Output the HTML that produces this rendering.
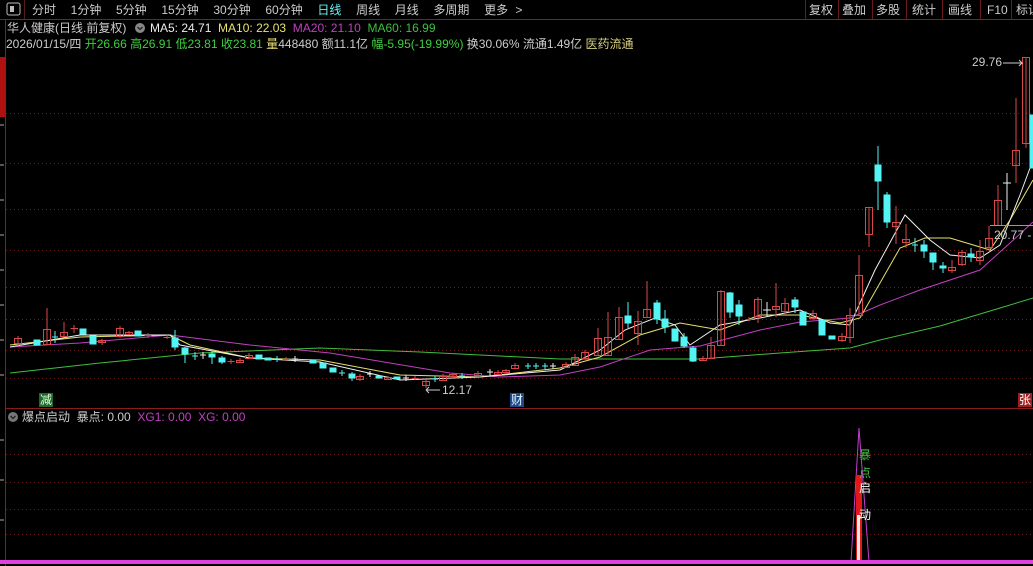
<!DOCTYPE html>
<html><head><meta charset="utf-8"><style>
html,body{margin:0;padding:0;background:#000;width:1033px;height:566px;overflow:hidden;font-family:"Liberation Sans","Noto Sans CJK SC",sans-serif;}
.t{position:absolute;font-size:12px;white-space:nowrap;line-height:14px}
</style></head><body>
<svg width="1033" height="566" style="position:absolute;left:0;top:0" xmlns="http://www.w3.org/2000/svg">
<!-- toolbar -->
<line x1="0" y1="19.5" x2="1033" y2="19.5" stroke="#8a1c1c"/>
<rect x="7" y="3" width="13" height="12" rx="2" fill="none" stroke="#bbb"/>
<rect x="10" y="6" width="4" height="6" fill="#bbb"/>
<line x1="24.5" y1="0" x2="24.5" y2="19" stroke="#5a1a1a"/>
<g stroke="#6a1a1a"><line x1="805.5" y1="0" x2="805.5" y2="19"/><line x1="838.5" y1="0" x2="838.5" y2="19"/><line x1="872.5" y1="0" x2="872.5" y2="19"/><line x1="906.5" y1="0" x2="906.5" y2="19"/><line x1="942.5" y1="0" x2="942.5" y2="19"/><line x1="980.5" y1="0" x2="980.5" y2="19"/><line x1="1011.5" y1="0" x2="1011.5" y2="19"/></g>
<circle cx="140" cy="28" r="5" fill="#888"/><path d="M137.5 27l2.5 2.5 2.5-2.5" stroke="#222" fill="none" stroke-width="1.3"/>
<!-- left axis -->
<line x1="5.5" y1="20" x2="5.5" y2="566" stroke="#8a1c1c"/>
<rect x="0" y="57" width="5" height="60" fill="#b01010"/>
<g stroke="#aaa"><line x1="0" y1="125" x2="4" y2="125"/><line x1="0" y1="165" x2="4" y2="165"/><line x1="0" y1="200" x2="4" y2="200"/><line x1="0" y1="235" x2="4" y2="235"/><line x1="0" y1="270" x2="4" y2="270"/><line x1="0" y1="305" x2="4" y2="305"/><line x1="0" y1="340" x2="4" y2="340"/><line x1="0" y1="375" x2="4" y2="375"/><line x1="0" y1="440" x2="4" y2="440"/><line x1="0" y1="480" x2="4" y2="480"/><line x1="0" y1="520" x2="4" y2="520"/></g>
<!-- grid -->
<g stroke="#6a1e1e" stroke-dasharray="1,3"><line x1="6" y1="113.5" x2="1033" y2="113.5"/><line x1="6" y1="163.5" x2="1033" y2="163.5"/><line x1="6" y1="209.5" x2="1033" y2="209.5"/><line x1="6" y1="250.5" x2="1033" y2="250.5"/><line x1="6" y1="287.5" x2="1033" y2="287.5"/><line x1="6" y1="319.5" x2="1033" y2="319.5"/><line x1="6" y1="350.5" x2="1033" y2="350.5"/><line x1="6" y1="378.5" x2="1033" y2="378.5"/>
<line x1="6" y1="454.5" x2="1033" y2="454.5"/><line x1="6" y1="482.5" x2="1033" y2="482.5"/><line x1="6" y1="509.5" x2="1033" y2="509.5"/><line x1="6" y1="534.5" x2="1033" y2="534.5"/></g>
<line x1="6" y1="408.5" x2="1033" y2="408.5" stroke="#8a1c1c"/>
<!-- MAs -->
<polyline fill="none" stroke="#3fbf3f" points="10,373 100,363 200,353 320,348 420,352 500,356 560,359 700,359 780,353 850,348 880,340 940,326 1000,308 1033,298"/>
<polyline fill="none" stroke="#c040c0" points="10,347 80,343 170,335 250,345 330,353 450,373 500,377 560,375 600,367 650,350 700,346 760,330 800,322 850,318 880,305 920,290 980,270 1010,243 1033,222"/>
<polyline fill="none" stroke="#e8e070" points="10,345 80,337 170,335 190,345 250,358 320,360 400,375 480,377 560,368 600,357 640,335 680,323 720,330 760,315 800,315 840,323 860,318 900,248 925,238 950,238 970,244 990,250 1010,220 1033,180"/>
<polyline fill="none" stroke="#f0f0f0" points="10,347 80,335 170,335 180,345 250,358 320,362 400,380 480,377 560,370 600,350 625,330 655,318 675,325 690,345 720,325 760,318 800,310 830,323 850,325 875,270 905,215 930,240 950,255 980,258 1000,245 1020,195 1033,160"/>
<!-- candles: red hollow -->
<g fill="none" stroke="#d84848" stroke-width="1">
<path d="M18 336v10M14.5 338.5h7v5h-7z M47 308v37M43.5 329.5h7v15h-7z M64 322v15M60.5 332.5h7v4h-7z M74 325v8M70.5 328.5h7v1 M102 339v6M98.5 340.5h7v2h-7z M120 326v12M116.5 328.5h7v8h-7z M129 331v4M125.5 332.5h7v2h-7z M148 333v5M144.5 335.5h7 M167 335v4M163.5 337.5h7 M231 359v5M227.5 361.5h7 M240 358v5M236.5 360.5h7v2h-7z M249 353v6M245.5 355.5h7v3h-7z M286 357v4M282.5 359.5h7 M360 374v7M356.5 376.5h7v3h-7z M388 376v4M384.5 377.5h7v2h-7z M415 376v4M411.5 378.5h7 M426 380v8M422.5 381.5h7v4h-7z M443 374v7M439.5 376.5h7v4h-7z M453 373v4M449.5 374.5h7v2h-7z M478 371v5M474.5 373.5h7v2h-7z M498 370v5M494.5 372.5h7v2h-7z M506 369v4M502.5 370.5h7v2h-7z M515 363v6M511.5 365.5h7v3h-7z M566 362v6M562.5 364.5h7v3h-7z M575 354v12M571.5 357.5h7v8h-7z M585 350v9M581.5 352.5h7v6h-7z M598 328v28M594.5 338.5h7v17h-7z M608 312v44M604.5 337.5h7v18h-7z M619 307v33M615.5 317.5h7v22h-7z M638 311v34M634.5 321.5h7v12h-7z M647 281v36M643.5 309.5h7v8h-7z M703 356v5M699.5 358.5h7v2h-7z M711 337v22M707.5 345.5h7v13h-7z M721 290v56M717.5 291.5h7v54h-7z M749 317v4M745.5 319.5h7 M758 297v26M754.5 299.5h7v17h-7z M776 283v34M772.5 306.5h7v3h-7z M785 298v17M781.5 303.5h7v8h-7z M813 310v10M809.5 313.5h7v5h-7z M842 333v9M838.5 336.5h7v4h-7z M850 308v35M846.5 315.5h7v22h-7z M859 255v60M855.5 275.5h7v40h-7z M869 207v40M865.5 207.5h7v27h-7z M896 206v38M892.5 222.5h7v4h-7z M906 224v24M902.5 239.5h7v3h-7z M952 260v13M948.5 267.5h7v3h-7z M962 250v16M958.5 252.5h7v12h-7z M980 240v25M976.5 251.5h7v9h-7z M989 226v25M985.5 238.5h7v9h-7z M998 185v41M994.5 200.5h7v25h-7z M1016 98v85M1012.5 150.5h7v15h-7z M1026 57v91M1022.5 57.5h7v86h-7z"/>
</g>
<!-- cyan -->
<g fill="#54f4f4" stroke="#54f4f4">
<rect x="34" y="340" width="6" height="5"/><path d="M55 331v12M52 337h6" fill="none"/><rect x="80" y="329" width="6" height="5"/><rect x="90" y="336" width="6" height="8"/><rect x="135" y="331" width="6" height="5"/>
<path d="M175 330v20M185 347v16M195 352v8M192 356h6M212 351v13M222 356v8M277 356v6M274 359h6M342 370v6M339 373h6M352 372v9M435 376v6M432 379h6M462 373v6M459 376h6M528 363v6M525 366h6M536 363v6M533 366h6M545 363v6M542 366h6" fill="none"/>
<rect x="172" y="338" width="6" height="9"/><rect x="182" y="348" width="6" height="6"/><rect x="209" y="354" width="6" height="3"/><rect x="219" y="358" width="6" height="4"/><rect x="256" y="355" width="6" height="4"/><rect x="265" y="358" width="6" height="2"/><rect x="310" y="360" width="6" height="3"/><rect x="320" y="363" width="6" height="5"/><rect x="330" y="368" width="6" height="4"/><rect x="349" y="374" width="6" height="4"/><rect x="376" y="376" width="6" height="2"/><rect x="394" y="377" width="6" height="2"/>
<path d="M628 302v26M657 300v24M665 310v23M684 333v15M693 346v16M730 292v26M739 300v25M795 297v16M878 146v64M887 192v36M915 238v14M912 245h6M924 240v18M933 253v17M943 262v11M971 248v14" fill="none"/>
<rect x="625" y="316" width="6" height="7"/><rect x="654" y="303" width="6" height="16"/><rect x="662" y="319" width="6" height="8"/><rect x="672" y="329" width="6" height="12"/><rect x="681" y="337" width="6" height="9"/><rect x="690" y="348" width="6" height="13"/><rect x="727" y="293" width="6" height="19"/><rect x="736" y="305" width="6" height="11"/><rect x="792" y="300" width="6" height="7"/><rect x="800" y="312" width="6" height="13"/><rect x="819" y="320" width="6" height="15"/><rect x="829" y="336" width="6" height="3"/><rect x="875" y="165" width="6" height="16"/><rect x="884" y="195" width="6" height="27"/><rect x="921" y="245" width="6" height="6"/><rect x="930" y="253" width="6" height="9"/><rect x="940" y="266" width="6" height="2"/><rect x="968" y="254" width="6" height="3"/><rect x="1030" y="115" width="4" height="53"/>
</g>
<!-- white crosses -->
<g stroke="#eee" fill="none"><path d="M203 352v7M200 355h6M295 356v6M292 359h6M370 371v6M367 374h6M406 375v6M403 378h6M490 369v7M487 372h6M553 363v6M550 366h6M767 302v14M763 310h8M1007 173v37M1003 183h8"/></g>
<!-- markers -->
<path d="M1003 63h19l-3-3M1022 63l-3 3" stroke="#ccc" fill="none"/>
<line x1="990" y1="225.5" x2="1033" y2="225.5" stroke="#999"/>
<path d="M426 390h14M426 390l3-3M426 390l3 3" stroke="#ccc" fill="none"/>
<!-- lower panel -->
<polygon points="851,562 859,428 869,562" fill="none" stroke="#c040d0"/>
<rect x="856" y="475" width="6" height="87" fill="#e01818"/>
<rect x="857" y="515" width="3" height="47" fill="#ffe8e8"/>
<circle cx="13" cy="417" r="5" fill="#777"/><path d="M10.5 416l2.5 2.5 2.5-2.5" stroke="#222" fill="none" stroke-width="1.3"/>
<rect x="0" y="560" width="1033" height="4" fill="#e040e0"/>
</svg>
<div class="t" style="left:32px;top:3px;color:#ccc;word-spacing:4px">分时&nbsp; 1分钟&nbsp; 5分钟&nbsp; 15分钟&nbsp; 30分钟&nbsp; 60分钟&nbsp; <span style="color:#6cf0f0">日线</span>&nbsp; 周线&nbsp; 月线&nbsp; 多周期&nbsp; 更多 &gt;</div>
<div class="t" style="left:809px;top:3px;color:#ccc">复权</div>
<div class="t" style="left:842px;top:3px;color:#ccc">叠加</div>
<div class="t" style="left:876px;top:3px;color:#ccc">多股</div>
<div class="t" style="left:912px;top:3px;color:#ccc">统计</div>
<div class="t" style="left:948px;top:3px;color:#ccc">画线</div>
<div class="t" style="left:987px;top:3px;color:#ccc">F10</div>
<div class="t" style="left:1016px;top:3px;color:#ccc">标识</div>
<div class="t" style="left:7px;top:21px;color:#ccc">华人健康(日线.前复权)</div>
<div class="t" style="left:150px;top:21px"><span style="color:#eee">MA5: 24.71</span>&nbsp; <span style="color:#e8e070">MA10: 22.03</span>&nbsp; <span style="color:#c040c0">MA20: 21.10</span>&nbsp; <span style="color:#3fbf3f">MA60: 16.99</span></div>
<div class="t" style="left:6px;top:37px;color:#ccc">2026/01/15/四 <span style="color:#3fcf3f">开26.66 高26.91 低23.81 收23.81</span> <span style="color:#e8e070">量</span>448480 额11.1亿 <span style="color:#3fcf3f">幅-5.95(-19.99%)</span> 换30.06% 流通1.49亿 <span style="color:#d8d080">医药流通</span></div>
<div class="t" style="left:972px;top:55px;color:#ccc">29.76</div>
<div class="t" style="left:994px;top:228px;color:#ccc">20.77 -</div>
<div class="t" style="left:442px;top:383px;color:#ccc">12.17</div>
<div class="t" style="left:39px;top:393px;color:#e0ffe0;background:#1f6a2a;padding:0 1px">减</div>
<div class="t" style="left:510px;top:393px;color:#e0f0ff;background:#1f4a8a;padding:0 1px">财</div>
<div class="t" style="left:1018px;top:393px;color:#fff;background:#a02020;padding:0 1px">张</div>
<div class="t" style="left:22px;top:410px;color:#ccc">爆点启动&nbsp; 暴点: 0.00&nbsp; <span style="color:#c040c0">XG1: 0.00&nbsp; XG: 0.00</span></div>
<div class="t" style="left:859px;top:448px;color:#3fbf3f">暴</div>
<div class="t" style="left:859px;top:466px;color:#3fbf3f">点</div>
<div class="t" style="left:859px;top:481px;color:#fff">启</div>
<div class="t" style="left:859px;top:508px;color:#fff">动</div>
</body></html>
